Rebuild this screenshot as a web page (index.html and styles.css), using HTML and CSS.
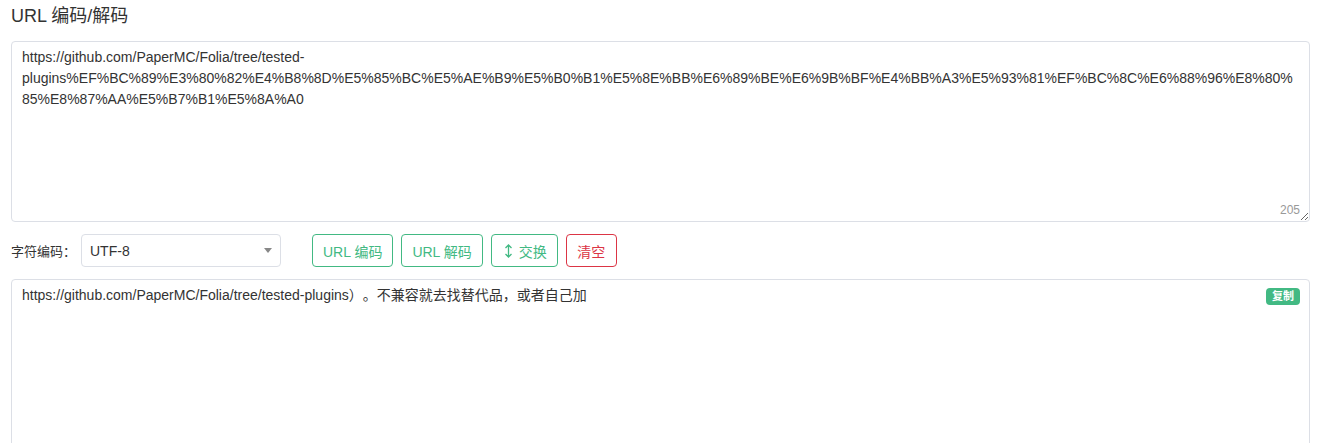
FILE: index.html
```html
<!DOCTYPE html>
<html lang="zh-CN">
<head>
<meta charset="utf-8">
<title>URL 编码/解码</title>
<link rel="stylesheet" href="styles.css">
</head>
<body>
<div class="tool">
  <h2 class="tool-title">URL 编码/解码</h2>
  <div class="input-wrap">
    <textarea class="input-area" spellcheck="false">https://github.com/PaperMC/Folia/tree/tested-plugins%EF%BC%89%E3%80%82%E4%B8%8D%E5%85%BC%E5%AE%B9%E5%B0%B1%E5%8E%BB%E6%89%BE%E6%9B%BF%E4%BB%A3%E5%93%81%EF%BC%8C%E6%88%96%E8%80%85%E8%87%AA%E5%B7%B1%E5%8A%A0</textarea>
    <span class="counter">205</span>
  </div>
  <div class="controls">
    <label class="charset-label">字符编码：</label>
    <div class="select">
      <span class="select-value">UTF-8</span>
      <span class="select-caret"></span>
    </div>
    <div class="btn-group">
      <button class="btn btn-green">URL 编码</button>
      <button class="btn btn-green">URL 解码</button>
      <button class="btn btn-green btn-swap"><svg class="swap-icon" width="9" height="14" viewBox="0 0 9 14"><path d="M4.5 1v12M1.5 4l3-3 3 3M1.5 10l3 3 3-3" fill="none" stroke="currentColor" stroke-width="1.3"/></svg>交换</button>
      <button class="btn btn-red">清空</button>
    </div>
  </div>
  <div class="output">
    <div class="output-text">https://github.com/PaperMC/Folia/tree/tested-plugins）。不兼容就去找替代品，或者自己加</div>
    <span class="copy-badge">复制</span>
  </div>
</div>
</body>
</html>
```

FILE: styles.css
```css
html, body {
  margin: 0;
  padding: 0;
  background: #fff;
}
body {
  font-family: "Liberation Sans", Arial, "Noto Sans CJK SC", sans-serif;
  color: #333;
  text-spacing-trim: space-all;
}
.tool {
  width: 1299px;
  margin-left: 11px;
}
.tool-title {
  margin: 0;
  height: 41px;
  padding-top: 5px;
  box-sizing: border-box;
  font-size: 18px;
  font-weight: normal;
  line-height: 22px;
  color: #333;
}
.input-wrap {
  position: relative;
  height: 181px;
}
.input-area {
  display: block;
  width: 100%;
  height: 181px;
  box-sizing: border-box;
  margin: 0;
  padding: 5px 10px;
  border: 1px solid #dcdfe6;
  border-radius: 4px;
  font-family: "Liberation Sans", Arial, "Noto Sans CJK SC", sans-serif;
  font-size: 14px;
  line-height: 21px;
  color: #333;
  resize: vertical;
  outline: none;
}
.counter {
  position: absolute;
  right: 10px;
  bottom: 5px;
  font-size: 12px;
  color: #999;
  line-height: 14px;
}
.controls {
  display: flex;
  align-items: center;
  margin-top: 12px;
  height: 33px;
}
.charset-label {
  font-size: 13px;
  color: #333;
  width: 70px;
  font-family: "Liberation Sans", "Noto Sans CJK SC", sans-serif;
}
.select {
  width: 200px;
  height: 33px;
  box-sizing: border-box;
  border: 1px solid #dcdfe6;
  border-radius: 4px;
  display: flex;
  align-items: center;
  justify-content: space-between;
  padding: 0 8px 0 8px;
}
.select-value {
  font-size: 14px;
  color: #333;
}
.select-caret {
  width: 0;
  height: 0;
  border-left: 4px solid transparent;
  border-right: 4px solid transparent;
  border-top: 5px solid #888;
}
.btn-group {
  display: flex;
  gap: 8px;
  margin-left: 31px;
}
.btn {
  height: 33px;
  box-sizing: border-box;
  padding: 0 10px;
  background: #fff;
  border-radius: 4px;
  font-family: "Liberation Sans", "Noto Sans CJK SC", sans-serif;
  font-size: 14px;
  display: inline-flex;
  align-items: center;
  gap: 6px;
  cursor: pointer;
}
.btn-swap {
  padding-left: 12px;
}
.btn-green {
  border: 1px solid #42b983;
  color: #42b983;
}
.btn-red {
  border: 1px solid #dc3545;
  color: #dc3545;
  padding: 0 10.5px;
}
.swap-icon {
  display: block;
}
.output {
  position: relative;
  margin-top: 12px;
  height: 181px;
  box-sizing: border-box;
  border: 1px solid #dcdfe6;
  border-radius: 4px;
  padding: 5px 10px;
}
.output-text {
  font-size: 14px;
  line-height: 21px;
  color: #333;
}
.copy-badge {
  position: absolute;
  top: 8px;
  right: 9px;
  background: #42b983;
  color: #fff;
  font-size: 11px;
  font-weight: bold;
  line-height: 17px;
  padding: 0 6px;
  border-radius: 4px;
}
```
